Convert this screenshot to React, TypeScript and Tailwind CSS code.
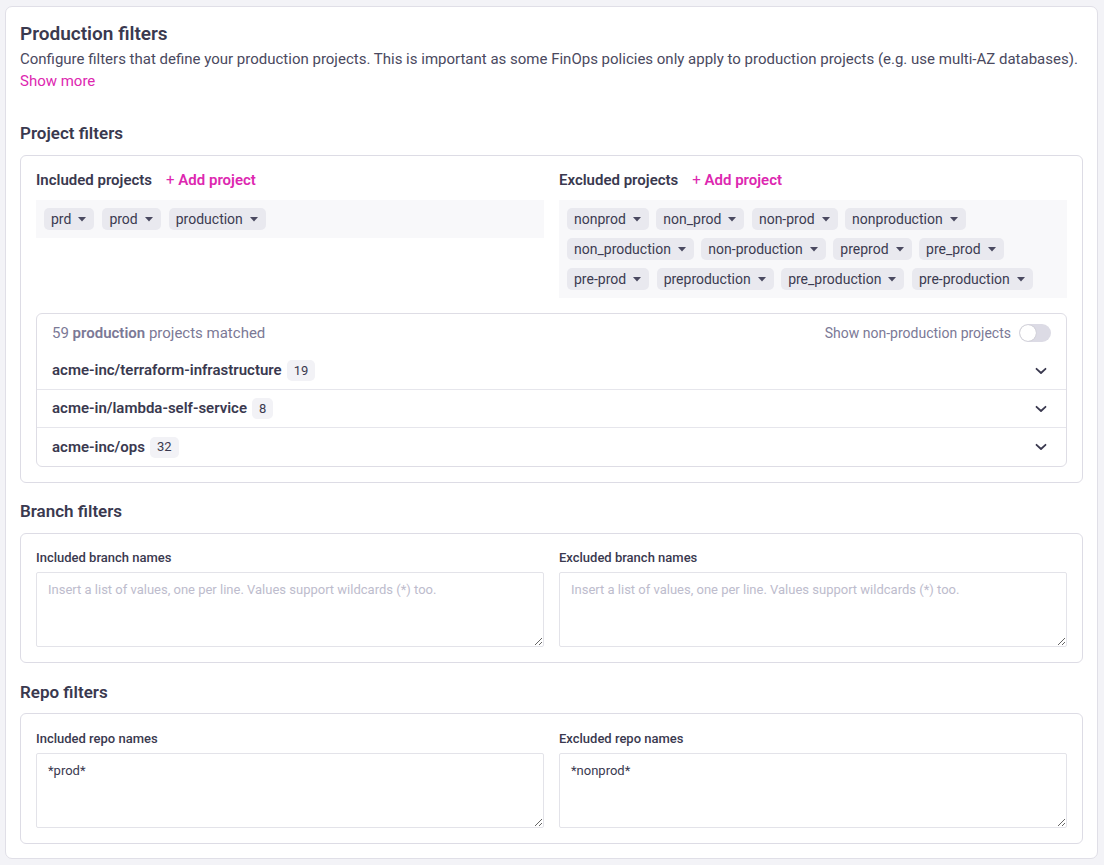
import React from "react";

const PINK = "text-[#dd27b0]";

function Caret() {
  return (
    <svg width="8" height="5" viewBox="0 0 8 5" className="ml-[7px] mt-[1px]">
      <path d="M0 0 L8 0 L4 4.5 Z" fill="#4a4960" />
    </svg>
  );
}

function Tag({ label }: { label: string }) {
  return (
    <span className="inline-flex h-[22px] items-center rounded-[5px] bg-[#e9e9ef] pl-[7px] pr-[8px] text-[14px] leading-none text-[#3c3b51]">
      {label}
      <Caret />
    </span>
  );
}

function ColumnHeader({ title }: { title: string }) {
  return (
    <div className="flex h-[20px] items-center text-[15px] leading-[20px]">
      <span className="font-semibold text-[#3a394f]">{title}</span>
      <span className={`ml-[14px] font-semibold ${PINK}`}>
        <span className="font-normal">+</span> Add project
      </span>
    </div>
  );
}

function Chevron() {
  return (
    <svg width="12" height="8" viewBox="0 0 12 8">
      <path d="M1.5 1.8 L6 6 L10.5 1.8" fill="none" stroke="#3a394f" strokeWidth="1.8" strokeLinecap="round" strokeLinejoin="round" />
    </svg>
  );
}

function Row({ name, count, last }: { name: string; count: string; last?: boolean }) {
  return (
    <div className={`flex h-[38px] items-center px-[15px] ${last ? "" : "border-b border-[#e6e6ec]"}`}>
      <span className="text-[15px] font-semibold text-[#3a394f]">{name}</span>
      <span className="ml-[5px] inline-flex h-[21px] items-center rounded-[5px] bg-[#f2f2f6] px-[7px] text-[13px] text-[#3a394f]">
        {count}
      </span>
      <span className="ml-auto mr-[4px] flex items-center">
        <Chevron />
      </span>
    </div>
  );
}

function AreaField({ label, value, placeholder }: { label: string; value?: string; placeholder?: string }) {
  return (
    <div className="flex flex-col">
      <div className="h-[18px] text-[13px] font-medium leading-[18px] text-[#3a394f]">{label}</div>
      <textarea
        className="mt-[5px] h-[75px] w-full rounded-[2px] border border-[#e3e3e9] px-[11px] py-[8px] text-[13px] leading-[18px] text-[#3a394f] outline-none placeholder:text-[#bdbccd]"
        defaultValue={value}
        placeholder={placeholder}
      />
    </div>
  );
}

export default function App() {
  const included = ["prd", "prod", "production"];
  const excluded = [
    "nonprod",
    "non_prod",
    "non-prod",
    "nonproduction",
    "non_production",
    "non-production",
    "preprod",
    "pre_prod",
    "pre-prod",
    "preproduction",
    "pre_production",
    "pre-production",
  ];
  const ph = "Insert a list of values, one per line. Values support wildcards (*) too.";
  return (
    <div
      className="min-h-[865px] bg-[#f3f3f7] pb-[7px] pl-[5px] pr-[6px] pt-[6px]"
      style={{ fontFamily: "Roboto, 'Liberation Sans', sans-serif" }}
    >
      <div className="rounded-[7px] border border-[#e0dfe7] bg-white px-[14px] pb-[14px] pt-[13px]">
        <h1 className="text-[19px] font-semibold leading-[28px] text-[#3a394f]">Production filters</h1>
        <p className="text-[15px] leading-[22px] text-[#4a4960]">
          Configure filters that define your production projects. This is important as some FinOps policies only apply to production projects (e.g. use multi-AZ databases).
        </p>
        <div className={`text-[15px] leading-[22px] ${PINK}`}>Show more</div>

        <h2 className="mt-[29px] text-[17px] font-semibold leading-[24px] text-[#3a394f]">Project filters</h2>
        <div className="mt-[10px] rounded-[6px] border border-[#dddce5] px-[15px] pb-[15px] pt-[14px]">
          <div className="grid grid-cols-2 gap-[15px]">
            <div>
              <ColumnHeader title="Included projects" />
              <div className="mt-[10px] flex flex-wrap gap-[8px] bg-[#f8f8fa] p-[8px]">
                {included.map((t) => (
                  <Tag key={t} label={t} />
                ))}
              </div>
            </div>
            <div>
              <ColumnHeader title="Excluded projects" />
              <div className="mt-[10px] flex flex-wrap gap-x-[7.5px] gap-y-[8px] bg-[#f8f8fa] p-[8px]">
                {excluded.map((t) => (
                  <Tag key={t} label={t} />
                ))}
              </div>
            </div>
          </div>

          <div className="mt-[15px] rounded-[6px] border border-[#dedde5]">
            <div className="flex h-[38px] items-center px-[15px] text-[#7b7996]">
              <span className="text-[15px]">
                59 <span className="font-semibold">production</span> projects matched
              </span>
              <span className="ml-auto flex items-center text-[14px]">
                Show non-production projects
                <span className="ml-[8px] flex h-[18px] w-[32px] items-center rounded-full bg-[#dcdbe5] p-[1px]">
                  <span className="h-[16px] w-[16px] rounded-full bg-white shadow-[0_0_1px_rgba(0,0,0,0.3)]" />
                </span>
              </span>
            </div>
            <Row name="acme-inc/terraform-infrastructure" count="19" />
            <Row name="acme-in/lambda-self-service" count="8" />
            <Row name="acme-inc/ops" count="32" last />
          </div>
        </div>

        <h2 className="mt-[16px] text-[17px] font-semibold leading-[24px] text-[#3a394f]">Branch filters</h2>
        <div className="mt-[10px] rounded-[6px] border border-[#dddce5] px-[15px] pb-[15px] pt-[15px]">
          <div className="grid grid-cols-2 gap-[15px]">
            <AreaField label="Included branch names" placeholder={ph} />
            <AreaField label="Excluded branch names" placeholder={ph} />
          </div>
        </div>

        <h2 className="mt-[17px] text-[17px] font-semibold leading-[24px] text-[#3a394f]">Repo filters</h2>
        <div className="mt-[9px] rounded-[6px] border border-[#dddce5] px-[15px] pb-[15px] pt-[16px]">
          <div className="grid grid-cols-2 gap-[15px]">
            <AreaField label="Included repo names" value="*prod*" />
            <AreaField label="Excluded repo names" value="*nonprod*" />
          </div>
        </div>
      </div>
    </div>
  );
}
